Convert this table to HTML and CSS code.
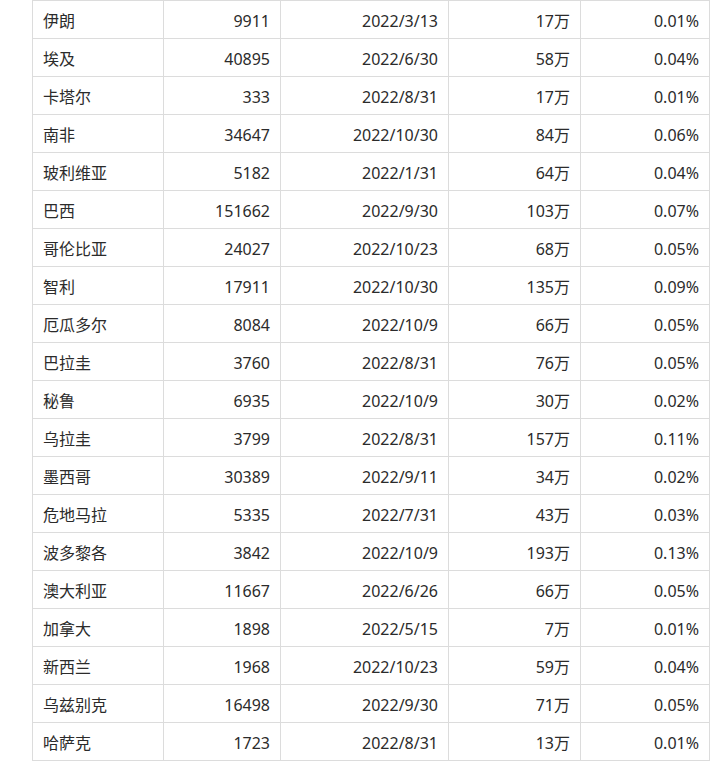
FILE: index.html
```html
<!DOCTYPE html>
<html lang="zh-CN">
<head>
<meta charset="utf-8">
<link rel="stylesheet" href="styles.css">
</head>
<body>
<table class="data">
<colgroup>
<col class="c1"><col class="c2"><col class="c3"><col class="c4"><col class="c5">
</colgroup>
<tbody>
<tr><td>伊朗</td><td>9911</td><td>2022/3/13</td><td>17万</td><td>0.01%</td></tr>
<tr><td>埃及</td><td>40895</td><td>2022/6/30</td><td>58万</td><td>0.04%</td></tr>
<tr><td>卡塔尔</td><td>333</td><td>2022/8/31</td><td>17万</td><td>0.01%</td></tr>
<tr><td>南非</td><td>34647</td><td>2022/10/30</td><td>84万</td><td>0.06%</td></tr>
<tr><td>玻利维亚</td><td>5182</td><td>2022/1/31</td><td>64万</td><td>0.04%</td></tr>
<tr><td>巴西</td><td>151662</td><td>2022/9/30</td><td>103万</td><td>0.07%</td></tr>
<tr><td>哥伦比亚</td><td>24027</td><td>2022/10/23</td><td>68万</td><td>0.05%</td></tr>
<tr><td>智利</td><td>17911</td><td>2022/10/30</td><td>135万</td><td>0.09%</td></tr>
<tr><td>厄瓜多尔</td><td>8084</td><td>2022/10/9</td><td>66万</td><td>0.05%</td></tr>
<tr><td>巴拉圭</td><td>3760</td><td>2022/8/31</td><td>76万</td><td>0.05%</td></tr>
<tr><td>秘鲁</td><td>6935</td><td>2022/10/9</td><td>30万</td><td>0.02%</td></tr>
<tr><td>乌拉圭</td><td>3799</td><td>2022/8/31</td><td>157万</td><td>0.11%</td></tr>
<tr><td>墨西哥</td><td>30389</td><td>2022/9/11</td><td>34万</td><td>0.02%</td></tr>
<tr><td>危地马拉</td><td>5335</td><td>2022/7/31</td><td>43万</td><td>0.03%</td></tr>
<tr><td>波多黎各</td><td>3842</td><td>2022/10/9</td><td>193万</td><td>0.13%</td></tr>
<tr><td>澳大利亚</td><td>11667</td><td>2022/6/26</td><td>66万</td><td>0.05%</td></tr>
<tr><td>加拿大</td><td>1898</td><td>2022/5/15</td><td>7万</td><td>0.01%</td></tr>
<tr><td>新西兰</td><td>1968</td><td>2022/10/23</td><td>59万</td><td>0.04%</td></tr>
<tr><td>乌兹别克</td><td>16498</td><td>2022/9/30</td><td>71万</td><td>0.05%</td></tr>
<tr><td>哈萨克</td><td>1723</td><td>2022/8/31</td><td>13万</td><td>0.01%</td></tr>
</tbody>
</table>
</body>
</html>
```
FILE: styles.css
```css
html, body {
  margin: 0;
  padding: 0;
  background: #fff;
}
.data {
  margin-left: 32px;
  border-collapse: collapse;
  table-layout: fixed;
  width: 677px;
  font-family: "Noto Sans", "Noto Sans CJK SC", sans-serif;
  font-size: 16px;
  color: #2b2b2b;
}
.c1 { width: 131px; }
.c2 { width: 117px; }
.c3 { width: 168px; }
.c4 { width: 132px; }
.c5 { width: 129px; }
.data td {
  border: 1px solid #dcdcdc;
  height: 37px;
  box-sizing: border-box;
  padding: 2px 10px 0;
  line-height: 20px;
  text-align: right;
  white-space: nowrap;
}
.data td:first-child {
  text-align: left;
}
.data tr {
  height: 38px;
}
```
